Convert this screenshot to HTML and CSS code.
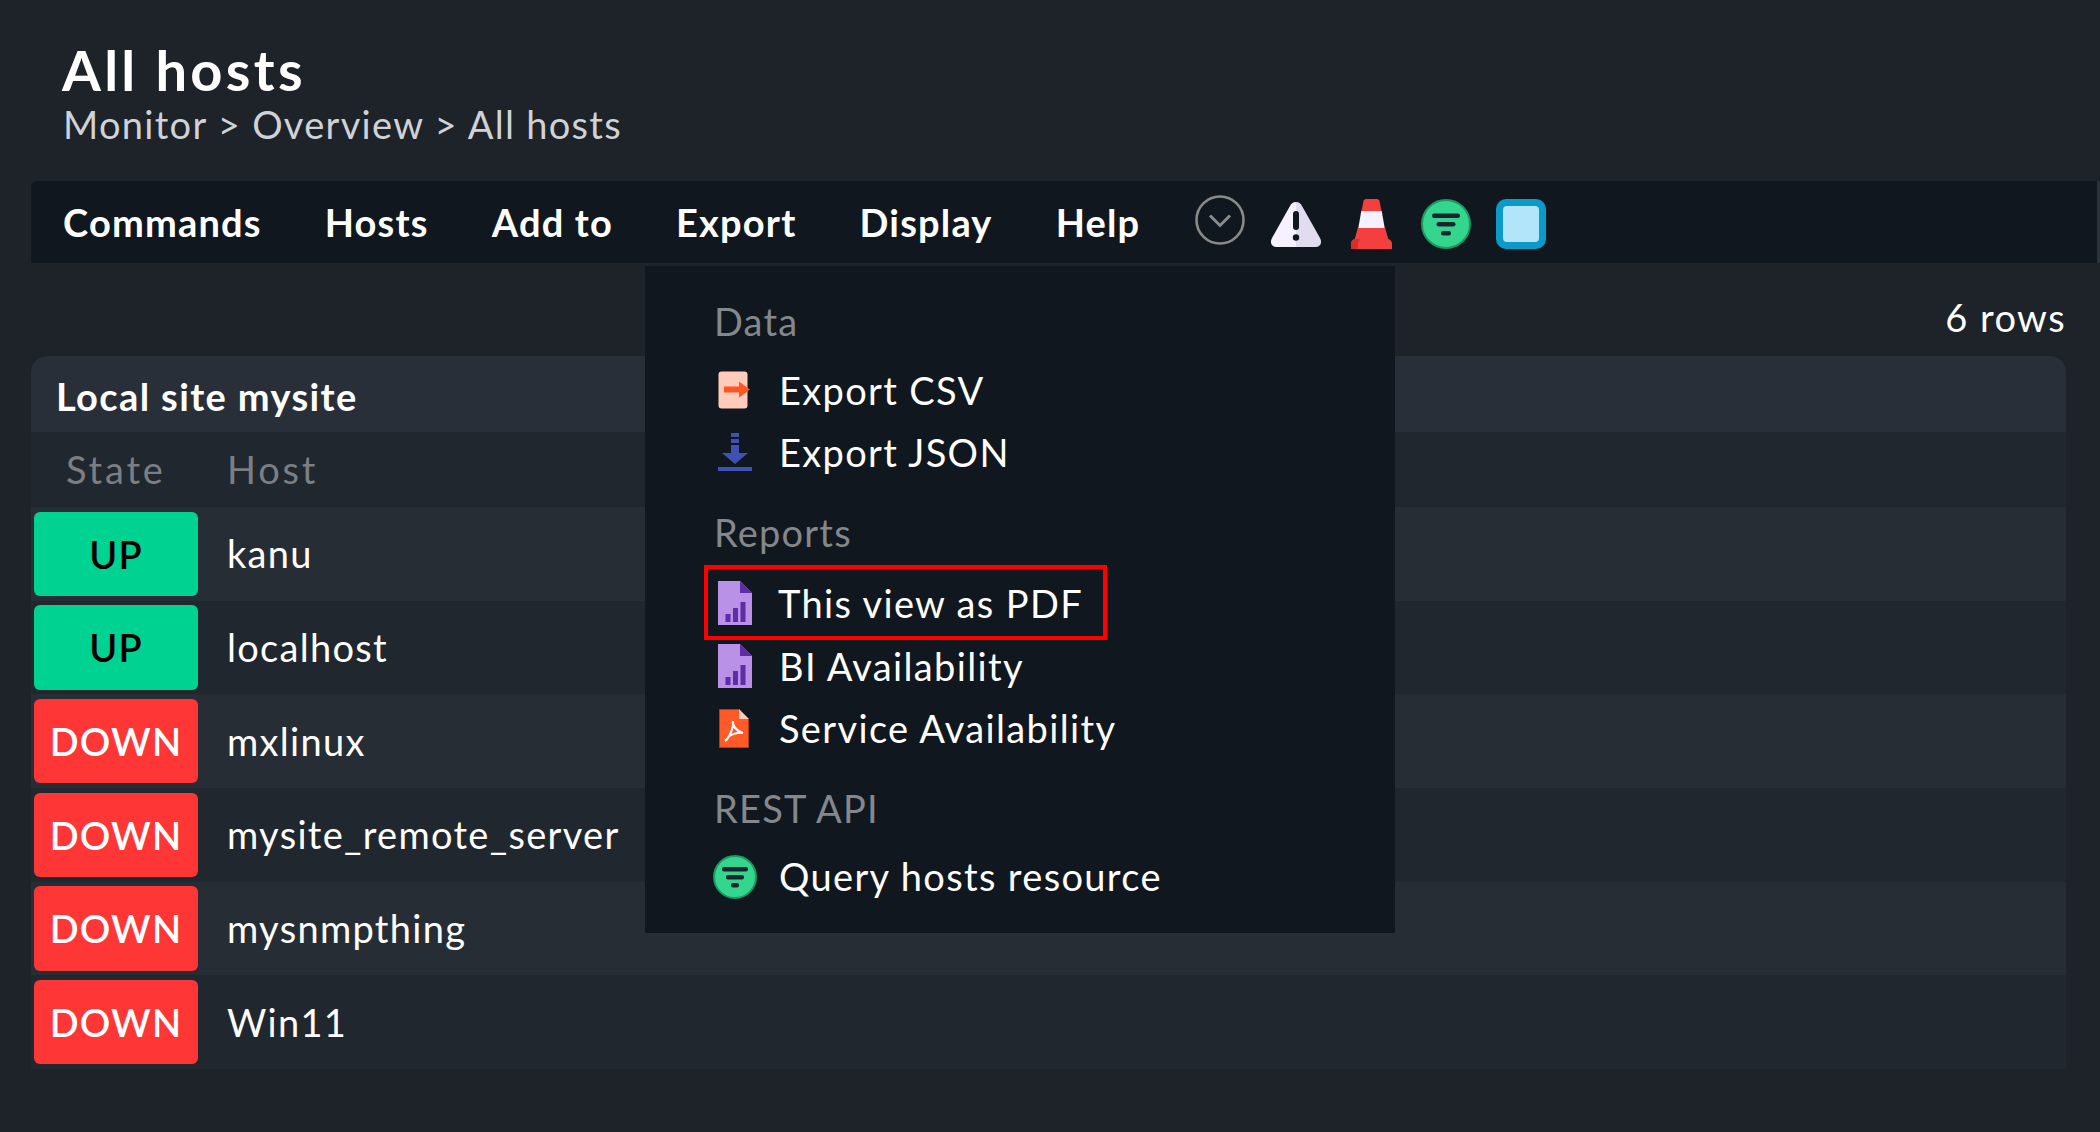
FILE: index.html
```html
<!DOCTYPE html>
<html lang="en">
<head>
<meta charset="utf-8">
<title>All hosts</title>
<link rel="stylesheet" href="styles.css">
</head>
<body>
<header class="page-head">
  <h1 class="title">All hosts</h1>
  <div class="crumbs">Monitor &gt; Overview &gt; All hosts</div>
</header>
<nav class="menubar">
  <span class="menu-item">Commands</span>
  <span class="menu-item">Hosts</span>
  <span class="menu-item">Add to</span>
  <span class="menu-item">Export</span>
  <span class="menu-item">Display</span>
  <span class="menu-item">Help</span>
  <div class="shortcuts">
    <svg class="sc sc-toggle" viewBox="0 0 50 50"><circle cx="25" cy="25" r="23.500" fill="none" stroke="#8a8a8a" stroke-width="2.600"/><path d="M15 20.500l10 10 10-10" fill="none" stroke="#8a8a8a" stroke-width="3"/></svg>
    <svg class="sc sc-warn" viewBox="0 0 50 46"><path d="M25 0c-3 0-4.500 1.500-6 4L1 36c-2.500 4.500-.5 9 4.500 9H25z" fill="#f5f1fe"/><path d="M25 0c3 0 4.500 1.500 6 4l18 32c2.500 4.500.5 9-4.500 9H25z" fill="#e1dcf0"/><rect x="22" y="9" width="6" height="19" rx="3" fill="#10171e"/><circle cx="25" cy="35.500" r="3.200" fill="#10171e"/></svg>
    <svg class="sc sc-cone" viewBox="0 0 41 50"><path d="M15 0h11c1.500 0 2.200 1 2.500 2l2 10H10.500l2-10C12.800 1 13.500 0 15 0z" fill="#f43f3f"/><path d="M10.300 12h20.400l3 17H7.300z" fill="#f5f1fe"/><path d="M6.800 29h27.400l3.300 12H3.500z" fill="#f43f3f"/><path d="M5 40h31c3 0 5 2 5 5v5H0v-5c0-3 2-5 5-5z" fill="#f43f3f"/><path d="M5 40h5c-2 1-3 3-3 5v5H0v-5c0-3 2-5 5-5z" fill="#d92c2c"/></svg>
    <svg class="sc sc-api" viewBox="0 0 50 50"><circle cx="25" cy="25" r="24" fill="#33d68c" stroke="#1a9a60" stroke-width="2"/><rect x="11" y="14.500" width="28" height="4.500" rx="2.200" fill="#1c2430"/><rect x="15.500" y="23" width="19" height="4.500" rx="2.200" fill="#1c2430"/><rect x="20" y="32" width="10" height="4.500" rx="2.200" fill="#1c2430"/></svg>
    <svg class="sc sc-box" viewBox="0 0 50 50"><rect width="50" height="50" rx="10" fill="#0a9bc8"/><rect x="7" y="7" width="36" height="36" rx="4" fill="#b3e5fa"/></svg>
  </div>
</nav>
<div class="rowcount">6 rows</div>
<section class="hosts">
  <h2 class="site">Local site mysite</h2>
  <div class="row row-head"><span class="state-h">State</span><span class="host-h">Host</span></div>
  <div class="row odd"><span class="badge up">UP</span><span class="host">kanu</span></div>
  <div class="row even"><span class="badge up">UP</span><span class="host">localhost</span></div>
  <div class="row odd"><span class="badge down">DOWN</span><span class="host">mxlinux</span></div>
  <div class="row even"><span class="badge down">DOWN</span><span class="host">mysite_remote_server</span></div>
  <div class="row odd"><span class="badge down">DOWN</span><span class="host">mysnmpthing</span></div>
  <div class="row even"><span class="badge down">DOWN</span><span class="host">Win11</span></div>
</section>
<div class="dropdown">
  <div class="dd-title dd-first">Data</div>
  <div class="dd-item"><svg class="ic" viewBox="0 0 34 38"><rect x="0.500" y="0.500" width="29" height="37" rx="3" fill="#ffccbc"/><path d="M6 16h15v-5l11 8-11 8v-5H6z" fill="#ff5722" transform="translate(0 -0.500)"/></svg><span>Export CSV</span></div>
  <div class="dd-item"><svg class="ic" viewBox="0 0 34 38"><rect x="13" y="0" width="8" height="4" fill="#3f51b5"/><rect x="13" y="6" width="8" height="4" fill="#3f51b5"/><path d="M13 12h8v8h9L17 31 4 20h9z" fill="#3f51b5"/><rect x="0" y="34" width="34" height="4" fill="#3f51b5"/></svg><span>Export JSON</span></div>
  <div class="dd-title dd-reports">Reports</div>
  <div class="dd-item dd-marked"><svg class="ic ic-doc" viewBox="0 0 34 44"><path d="M0 0h22l12 12v32H0z" fill="#b991e6"/><path d="M22 0l12 12H22z" fill="#5e2ca5"/><rect x="7.500" y="33" width="5" height="8" fill="#5e2ca5"/><rect x="15" y="27" width="5" height="14" fill="#5e2ca5"/><rect x="22.500" y="21" width="5" height="20" fill="#5e2ca5"/></svg><span>This view as PDF</span></div>
  <div class="dd-item"><svg class="ic ic-doc" viewBox="0 0 34 44"><path d="M0 0h22l12 12v32H0z" fill="#b991e6"/><path d="M22 0l12 12H22z" fill="#5e2ca5"/><rect x="7.500" y="33" width="5" height="8" fill="#5e2ca5"/><rect x="15" y="27" width="5" height="14" fill="#5e2ca5"/><rect x="22.500" y="21" width="5" height="20" fill="#5e2ca5"/></svg><span>BI Availability</span></div>
  <div class="dd-item"><svg class="ic ic-pdf" viewBox="0 0 30 39"><path d="M.5.500h19l10 10v28H.5z" fill="#ff5a27" stroke="#b33a17"/><path d="M20 0l10 10H20z" fill="#ffccbc"/><path d="M6 32c3-2 6-8 8-15M14 12c-1 4 3 10 10 12-5-1-10 1-14 3" fill="none" stroke="#fff" stroke-width="2.200"/></svg><span>Service Availability</span></div>
  <div class="dd-title dd-rest">REST API</div>
  <div class="dd-item dd-last"><svg class="ic ic-api" viewBox="0 0 44 44"><circle cx="22" cy="22" r="21" fill="#33d68c" stroke="#1a9a60" stroke-width="2"/><rect x="9" y="12" width="26" height="4.500" rx="2" fill="#1c2430"/><rect x="13" y="20" width="18" height="4.500" rx="2" fill="#1c2430"/><rect x="18" y="28" width="8" height="4.500" rx="2" fill="#1c2430"/></svg><span>Query hosts resource</span></div>
</div>
</body>
</html>
```
FILE: styles.css
```css
* { box-sizing: border-box; }
html, body { margin: 0; height: 1132px; overflow: hidden; }
body {
  position: relative;
  background: #1e2229;
  color: #fff;
  font-family: Lato, "Open Sans", sans-serif;
  padding: 0 34px 0 31px;
}
.page-head { height: 181px; padding: 37px 0 0 31px; }
.title {
  margin: 0;
  font-size: 56px;
  line-height: 66px;
  font-weight: 700;
  letter-spacing: 3.300px;
}
.crumbs {
  margin-top: -2px;
  padding-left: 1px;
  font-size: 38px;
  line-height: 46px;
  color: #cfd2d6;
  letter-spacing: 1.300px;
}
.menubar {
  display: flex;
  align-items: center;
  height: 82px;
  margin-right: -34px;
  padding-left: 32px;
  background: #10171e;
  border-right: 3px solid #2b323a;
  border-radius: 6px 0 0 0;
}
.menu-item {
  margin-right: 63.050px;
  font-size: 38px;
  font-weight: 700;
  letter-spacing: 1.180px;
}
.shortcuts { display: flex; align-items: center; margin-left: -8.500px; }
.sc { display: block; height: 50px; margin-top: 4px; }
.sc-toggle { width: 50px; margin: -4px 26px 0 0; }
.sc-warn { width: 50px; height: 46px; margin: 5px 30px 0 0; }
.sc-cone { width: 41px; margin-right: 29px; }
.sc-api { width: 50px; margin-right: 25px; }
.sc-box { width: 50px; }
.rowcount {
  height: 93px;
  padding-top: 31px;
  text-align: right;
  font-size: 38px;
  line-height: 46px;
  letter-spacing: 1.400px;
}
.hosts { border-radius: 16px 16px 0 0; overflow: hidden; }
.site {
  margin: 0;
  height: 76px;
  padding: 17px 0 0 25px;
  background: #282f38;
  font-size: 38px;
  line-height: 46px;
  font-weight: 700;
  letter-spacing: 1.370px;
}
.row {
  display: flex;
  align-items: center;
  height: 93.670px;
  font-size: 38px;
  letter-spacing: 1.300px;
}
.row-head { height: 75px; background: #21272e; color: #7b7e83; letter-spacing: 2.800px; padding-bottom: 2px; }
.odd { background: #272d35; }
.even { background: #21272e; }
.state-h { width: 196px; padding-left: 35px; }
.host { padding-bottom: 1px; }
.badge {
  width: 164px;
  height: 84.500px;
  margin: 0 29px 0 3px;
  border-radius: 6px;
  font-weight: 600;
  line-height: 84px;
  text-align: center;
  letter-spacing: 1.200px;
}
.up { background: #00d391; color: #000; }
.down { background: #ff3636; color: #fff; }
.dropdown {
  position: absolute;
  left: 645px;
  top: 266px;
  width: 750px;
  height: 667px;
  padding: 0 0 0 69px;
  background: #10171e;
  font-size: 38px;
  letter-spacing: 1.350px;
}
.dd-title { height: 46px; line-height: 46px; color: #84878b; margin: 27px 0 16px; letter-spacing: 1.200px; }
.dd-first { margin: 32px 0 14.700px; }
.dd-reports { margin: 26px 0 17px; }
.dd-rest { margin: 26px 0 14px; }
.dd-item {
  display: flex;
  align-items: center;
  height: 62.300px;
  line-height: 46px;
}
.dd-marked { position: relative; }
.dd-marked::before {
  content: "";
  box-sizing: border-box;
  position: absolute;
  left: -10px;
  top: -7px;
  width: 403px;
  height: 75px;
  border: 4px solid #f00;
}
.ic { display: block; width: 34px; height: 38px; margin: 0 27px 0 4px; flex: none; }
.ic-doc { height: 44px; }
.dd-marked .ic { margin-right: 26px; }
.ic-pdf { width: 30px; height: 39px; margin: 0 30px 0 5px; }
.ic-api { width: 44px; height: 44px; margin: 2px 22px 0 -1px; }
```
